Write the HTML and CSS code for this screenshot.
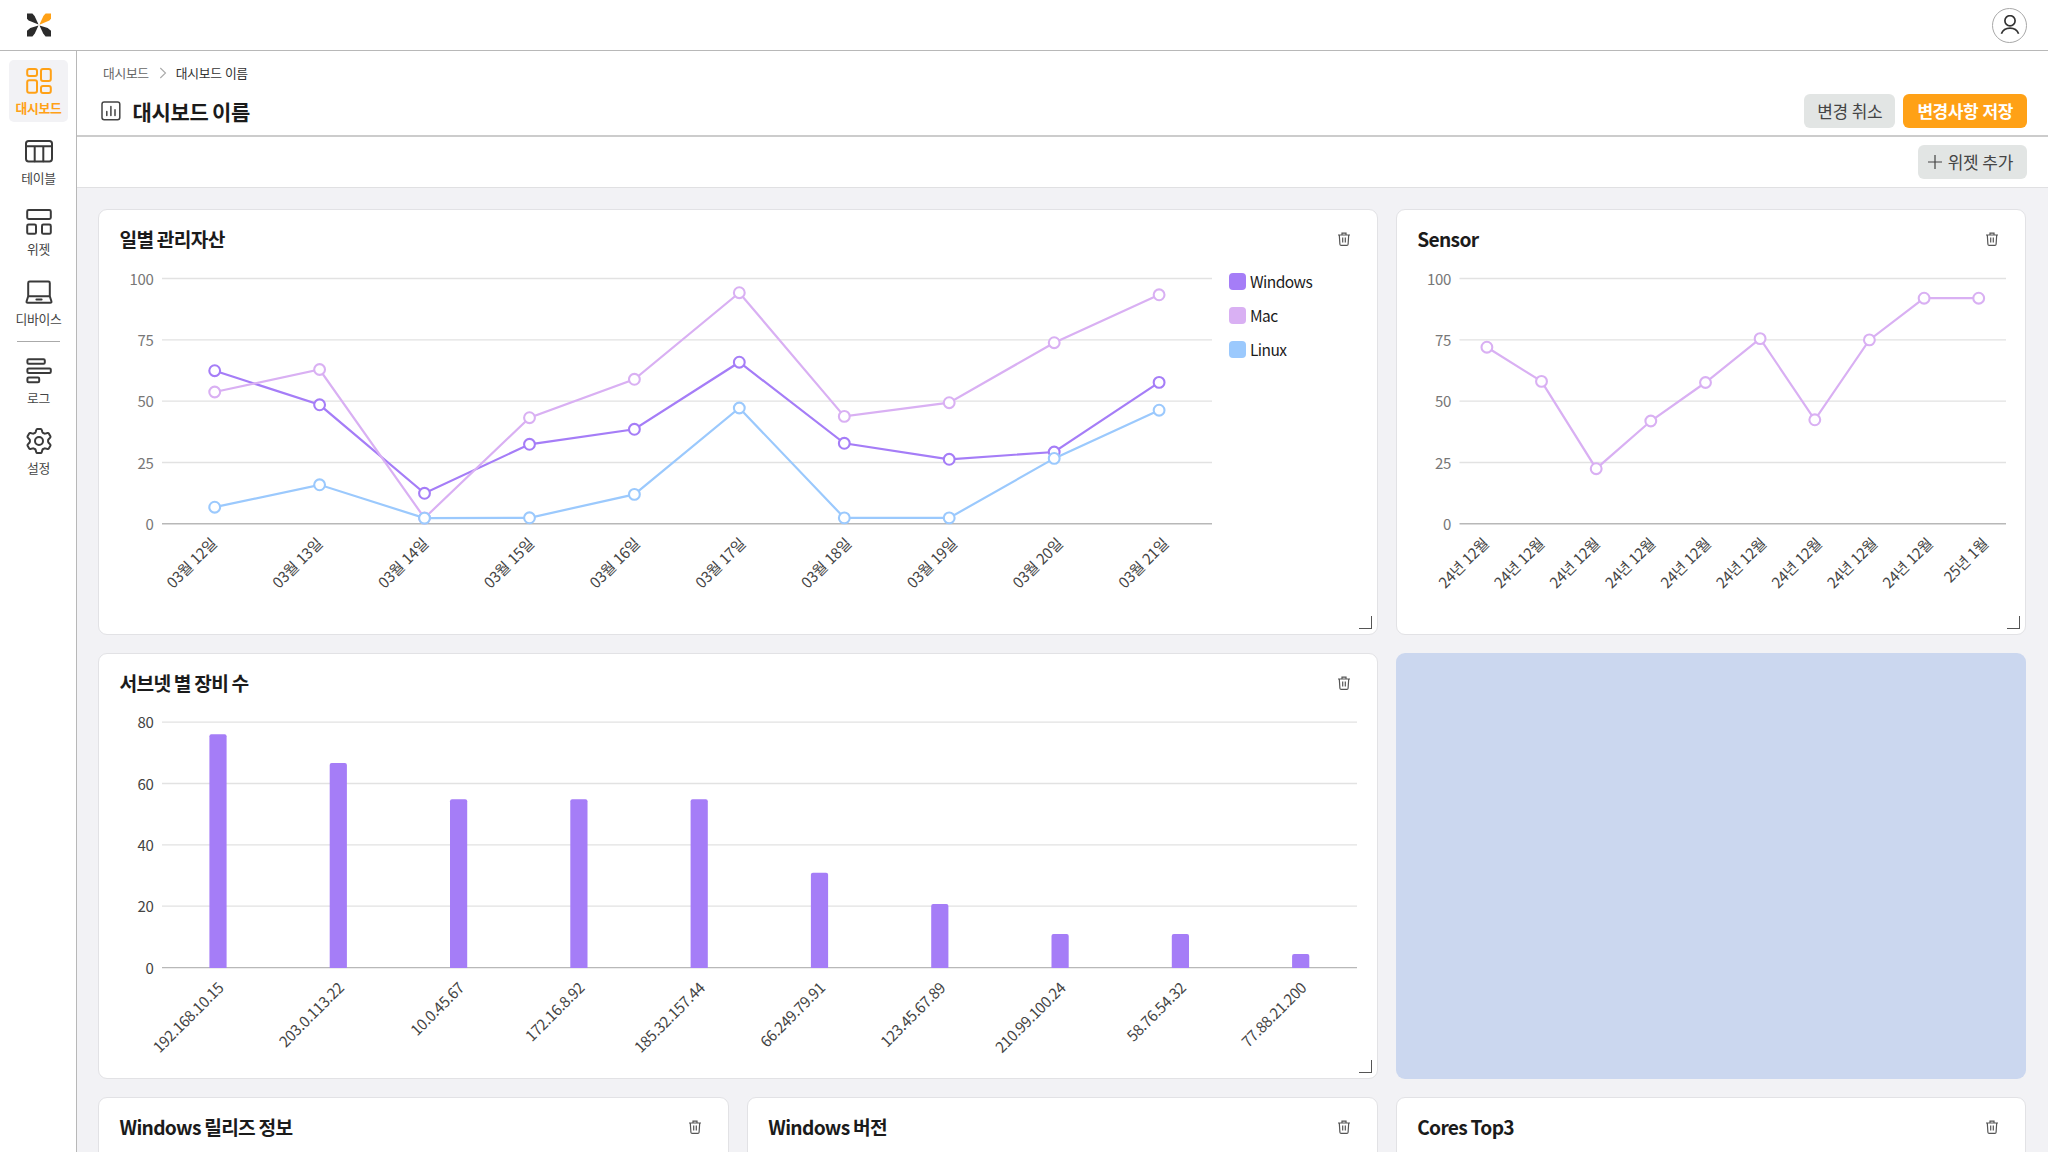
FILE: index.html
```
<!DOCTYPE html>
<html lang="ko">
<head>
<meta charset="utf-8">
<title>대시보드 이름</title>
<link rel="stylesheet" href="styles.css">
</head>
<body>
<svg class="defs" width="0" height="0" aria-hidden="true">
  <defs>
    <symbol id="trash" viewBox="0 0 16 16">
      <path d="M2 4h12M6 3.8V2.1h4v1.7M3.3 4l.6 9.2c.1.8.5 1.2 1.2 1.2h5.8c.7 0 1.1-.4 1.2-1.2l.6-9.2M6.7 6.4v5.2M9.3 6.4v5.2"/>
    </symbol>
    <marker id="dot-violet" markerUnits="userSpaceOnUse" markerWidth="14" markerHeight="14" refX="7" refY="7"><circle class="dot violet" cx="7" cy="7" r="5.4"/></marker>
    <marker id="dot-lilac" markerUnits="userSpaceOnUse" markerWidth="14" markerHeight="14" refX="7" refY="7"><circle class="dot lilac" cx="7" cy="7" r="5.4"/></marker>
    <marker id="dot-sky" markerUnits="userSpaceOnUse" markerWidth="14" markerHeight="14" refX="7" refY="7"><circle class="dot sky" cx="7" cy="7" r="5.4"/></marker>
  </defs>
</svg>

<header class="topbar">
  <svg class="logo" width="26" height="26" viewBox="0 0 26 26">
    <path class="ink" d="M1 1.400h5.400L8.600 4l3.900 8.500L2.600 8.400 1 6.800z"/>
    <path class="accent" d="M25 1.400h-5.400L17.400 4l-4 8.700 10-4.300 1.600-1.700z"/>
    <path class="ink" d="M1 24.500h5.400l2.400-2.900 3.700-8-8.200 2.400L1 18.700z"/>
    <path class="ink" d="M25 24.500h-5.400l-2.400-2.900-3.700-8 8.200 2.400 3.300 2.700z"/>
  </svg>
  <button class="avatar" aria-label="내 계정">
    <svg width="20" height="20" viewBox="0 0 20 20"><circle cx="10" cy="5.800" r="5.100"/><path d="M1.400 18.800c1.400-3.600 4.600-5.600 8.600-5.600s7.200 2 8.600 5.600"/></svg>
  </button>
</header>

<div class="shell">
  <nav class="sidebar">
    <a class="nav-item active">
      <svg viewBox="0 0 32 32"><rect x="4.2" y="4" width="9.8" height="7" rx="2"/><rect x="18" y="4" width="9.8" height="12" rx="2"/><rect x="4.2" y="15.2" width="9.8" height="12.6" rx="2"/><rect x="18" y="21" width="9.8" height="7" rx="2"/></svg>
      <span>대시보드</span>
    </a>
    <a class="nav-item">
      <svg viewBox="0 0 32 32"><rect x="3" y="6" width="26" height="20.4" rx="2.6"/><path d="M3 11.2h26M11.7 11.2v15M20.3 11.2v15"/></svg>
      <span>테이블</span>
    </a>
    <a class="nav-item">
      <svg viewBox="0 0 32 32"><rect x="4.2" y="4" width="23.6" height="9" rx="1.4"/><rect x="4.2" y="18.6" width="8.8" height="9.2" rx="1.4"/><rect x="19" y="18.6" width="8.8" height="9.2" rx="1.4"/></svg>
      <span>위젯</span>
    </a>
    <a class="nav-item">
      <svg viewBox="0 0 32 32"><path d="M5.2 20.2V7q0-1.4 1.4-1.4h18.8q1.4 0 1.4 1.4v13.2M5.2 20.2h21.6l1.6 5q.4 1.6-1.2 1.6H4.8q-1.6 0-1.2-1.6zM13.4 23.6h5.2"/></svg>
      <span>디바이스</span>
    </a>
    <hr class="nav-line">
    <a class="nav-item">
      <svg viewBox="0 0 32 32"><rect x="4.4" y="4.2" width="17.4" height="4.6" rx="1.2"/><rect x="4.4" y="13.4" width="23.4" height="4.6" rx="1.2"/><rect x="4.4" y="22.6" width="11.8" height="4.6" rx="1.2"/></svg>
      <span>로그</span>
    </a>
    <a class="nav-item">
      <svg viewBox="0 0 32 32"><path d="M14.3 4h3.4q.8 0 1 .8l.7 2.3q.2.6.8.9l.8.4q.6.3 1.2.2l2.4-.6q.8-.2 1.200.5l1.600 2.800q.4.7-.2 1.300l-1.600 1.700q-.5.500-.5 1.200v1q0 .7.500 1.200l1.600 1.700q.6.600.2 1.300l-1.600 2.800q-.4.700-1.200.500l-2.400-.6q-.6-.1-1.200.2l-.8.400q-.6.300-.8.900l-.7 2.300q-.2.800-1 .800h-3.400q-.8 0-1-.8l-.7-2.300q-.2-.6-.8-.9l-.8-.4q-.6-.3-1.200-.2l-2.400.6q-.8.200-1.200-.5l-1.600-2.800q-.4-.7.2-1.300l1.600-1.700q.5-.5.500-1.200v-1q0-.7-.5-1.200l-1.600-1.700q-.6-.6-.2-1.300l1.600-2.800q.4-.7 1.200-.5l2.400.6q.6.1 1.200-.2l.8-.4q.6-.3.800-.9l.7-2.300q.2-.8 1-.8z"/><circle cx="16" cy="16" r="4"/></svg>
      <span>설정</span>
    </a>
  </nav>

  <main class="main">
    <section class="page-head">
      <div class="crumbs">
        <span>대시보드</span>
        <svg width="8" height="12" viewBox="0 0 8 12"><path d="M1.300 1l5.200 5-5.200 5"/></svg>
        <span class="current">대시보드 이름</span>
      </div>
      <div class="title-row">
        <svg class="title-icon" width="20" height="20" viewBox="0 0 20 20"><rect x="1" y="1" width="17.800" height="17.800" rx="2.200"/><path d="M5.800 10.600v4M9.900 5.400v9.200M14 8.800v5.800"/></svg>
        <h1>대시보드 이름</h1>
        <div class="actions">
          <button class="btn cancel">변경 취소</button>
          <button class="btn primary">변경사항 저장</button>
        </div>
      </div>
    </section>
    <section class="toolbar">
      <button class="btn add"><svg width="14" height="14" viewBox="0 0 14 14"><path d="M7 0v14M0 7h14"/></svg>위젯 추가</button>
    </section>

    <section class="board">
      <article class="card wide">
        <header class="card-head"><h2>일별 관리자산</h2><svg class="trash"><use href="#trash"/></svg></header>
        <div class="card-body">
          <svg class="chart" width="1120" height="366" viewBox="99 268 1120 366">
            <path class="grid" d="M162 278.500h1050M162 339.800h1050M162 401.200h1050M162 462.500h1050"/>
            <path class="axis" d="M162 523.800h1050"/>
            <g class="ylab"><text x="153.500" y="284.500">100</text><text x="153.500" y="345.800">75</text><text x="153.500" y="407.200">50</text><text x="153.500" y="468.500">25</text><text x="153.500" y="529.800">0</text></g>
            <polyline class="line violet" marker-start="url(#dot-violet)" marker-mid="url(#dot-violet)" marker-end="url(#dot-violet)" points="214.700,370.700 319.600,404.800 424.500,493.300 529.500,444.300 634.400,429.300 739.300,362.200 844.300,443.300 949.200,459.300 1054.200,452 1159.100,382.400"/>
            <polyline class="line lilac" marker-start="url(#dot-lilac)" marker-mid="url(#dot-lilac)" marker-end="url(#dot-lilac)" points="214.700,392 319.600,369.500 424.500,518 529.500,417.700 634.400,379.300 739.300,292.700 844.300,416.400 949.200,402.700 1054.200,342.700 1159.100,294.800"/>
            <polyline class="line sky" marker-start="url(#dot-sky)" marker-mid="url(#dot-sky)" marker-end="url(#dot-sky)" points="214.700,507.200 319.600,484.800 424.500,518.100 529.500,517.800 634.400,494.400 739.300,408 844.300,517.900 949.200,517.900 1054.200,458.400 1159.100,410.200"/>
            <g class="xlab">
              <text transform="translate(217.700,544.700) rotate(-45)">03월 12일</text><text transform="translate(323.500,544.700) rotate(-45)">03월 13일</text><text transform="translate(429.200,544.700) rotate(-45)">03월 14일</text><text transform="translate(535,544.700) rotate(-45)">03월 15일</text><text transform="translate(640.700,544.700) rotate(-45)">03월 16일</text><text transform="translate(746.500,544.700) rotate(-45)">03월 17일</text><text transform="translate(852.200,544.700) rotate(-45)">03월 18일</text><text transform="translate(958,544.700) rotate(-45)">03월 19일</text><text transform="translate(1063.700,544.700) rotate(-45)">03월 20일</text><text transform="translate(1169.500,544.700) rotate(-45)">03월 21일</text>
            </g>
          </svg>
          <ul class="legend"><li><i class="sw violet"></i>Windows</li><li><i class="sw lilac"></i>Mac</li><li><i class="sw sky"></i>Linux</li></ul>
        </div>
        <span class="grip"></span>
      </article>

      <article class="card">
        <header class="card-head"><h2>Sensor</h2><svg class="trash"><use href="#trash"/></svg></header>
        <div class="card-body">
          <svg class="chart" width="629" height="366" viewBox="1396.500 268 629 366">
            <path class="grid" d="M1459 278.500h546.500M1459 339.800h546.500M1459 401.200h546.500M1459 462.500h546.500"/>
            <path class="axis" d="M1459 523.800h546.500"/>
            <g class="ylab"><text x="1450.500" y="284.500">100</text><text x="1450.500" y="345.800">75</text><text x="1450.500" y="407.200">50</text><text x="1450.500" y="468.500">25</text><text x="1450.500" y="529.800">0</text></g>
            <polyline class="line lilac" marker-start="url(#dot-lilac)" marker-mid="url(#dot-lilac)" marker-end="url(#dot-lilac)" points="1486.400,347.200 1541,381.400 1595.700,468.700 1650.300,421 1705,382.500 1759.600,338.600 1814.300,419.800 1868.900,339.900 1923.600,298.200 1978.200,298.200"/>
            <g class="xlab">
              <text transform="translate(1489.200,544.700) rotate(-45)">24년 12월</text><text transform="translate(1544.700,544.700) rotate(-45)">24년 12월</text><text transform="translate(1600.200,544.700) rotate(-45)">24년 12월</text><text transform="translate(1655.700,544.700) rotate(-45)">24년 12월</text><text transform="translate(1711.200,544.700) rotate(-45)">24년 12월</text><text transform="translate(1766.700,544.700) rotate(-45)">24년 12월</text><text transform="translate(1822.200,544.700) rotate(-45)">24년 12월</text><text transform="translate(1877.700,544.700) rotate(-45)">24년 12월</text><text transform="translate(1933.200,544.700) rotate(-45)">24년 12월</text><text transform="translate(1988.700,544.700) rotate(-45)">25년 1월</text>
            </g>
          </svg>
        </div>
        <span class="grip"></span>
      </article>

      <article class="card wide">
        <header class="card-head"><h2>서브넷 별 장비 수</h2><svg class="trash"><use href="#trash"/></svg></header>
        <div class="card-body">
          <svg class="chart" width="1277" height="366" viewBox="99 712 1277 366">
            <path class="grid" d="M162 722.200h1195M162 783.500h1195M162 844.900h1195M162 906.200h1195"/>
            <path class="axis" d="M162 967.600h1195"/>
            <g class="ylab dark"><text x="153.500" y="728.200">80</text><text x="153.500" y="789.500">60</text><text x="153.500" y="850.900">40</text><text x="153.500" y="912.200">20</text><text x="153.500" y="973.600">0</text></g>
            <g class="bars">
              <path d="M209.400 968V736.300q0-2 2-2h13.200q2 0 2 2V968z"/><path d="M329.700 968V765q0-2 2-2h13.200q2 0 2 2V968z"/><path d="M450 968V801.300q0-2 2-2h13.200q2 0 2 2V968z"/><path d="M570.300 968V801.300q0-2 2-2h13.200q2 0 2 2V968z"/><path d="M690.600 968V801.300q0-2 2-2h13.200q2 0 2 2V968z"/><path d="M810.900 968V874.800q0-2 2-2h13.200q2 0 2 2V968z"/><path d="M931.200 968V906q0-2 2-2h13.200q2 0 2 2V968z"/><path d="M1051.500 968V936q0-2 2-2h13.200q2 0 2 2V968z"/><path d="M1171.800 968V936q0-2 2-2h13.200q2 0 2 2V968z"/><path d="M1292.100 968V956q0-2 2-2h13.200q2 0 2 2V968z"/>
            </g>
            <g class="xlab">
              <text transform="translate(224.600,989) rotate(-45)">192.168.10.15</text><text transform="translate(344.900,989) rotate(-45)">203.0.113.22</text><text transform="translate(465.200,989) rotate(-45)">10.0.45.67</text><text transform="translate(585.500,989) rotate(-45)">172.16.8.92</text><text transform="translate(705.800,989) rotate(-45)">185.32.157.44</text><text transform="translate(826.100,989) rotate(-45)">66.249.79.91</text><text transform="translate(946.400,989) rotate(-45)">123.45.67.89</text><text transform="translate(1066.700,989) rotate(-45)">210.99.100.24</text><text transform="translate(1187,989) rotate(-45)">58.76.54.32</text><text transform="translate(1307.300,989) rotate(-45)">77.88.21.200</text>
            </g>
          </svg>
        </div>
        <span class="grip"></span>
      </article>

      <div class="drop-slot"></div>

      <article class="card"><header class="card-head"><h2>Windows 릴리즈 정보</h2><svg class="trash"><use href="#trash"/></svg></header></article>
      <article class="card"><header class="card-head"><h2>Windows 버전</h2><svg class="trash"><use href="#trash"/></svg></header></article>
      <article class="card"><header class="card-head"><h2>Cores Top3</h2><svg class="trash"><use href="#trash"/></svg></header></article>
    </section>
  </main>
</div>
</body>
</html>
```
FILE: styles.css
```
* { box-sizing: border-box; }
body {
  margin: 0;
  height: 1152px;
  display: flex;
  flex-direction: column;
  overflow: hidden;
  background: #fff;
  color: #1b1b1b;
  font-family: "Noto Sans CJK KR", "Noto Sans", sans-serif;
  letter-spacing: -0.02em;
}
svg { display: block; fill: none; flex: none; }
.defs { position: absolute; }
h1, h2, ul { margin: 0; padding: 0; }
button { font: inherit; letter-spacing: inherit; border: 0; padding: 0; }

.topbar {
  flex: none;
  height: 51px;
  padding: 0 21px 0 25.5px;
  display: flex;
  align-items: center;
  justify-content: space-between;
  border-bottom: 1px solid #b8b8b8;
}
.logo .ink { fill: #2b2b2b; }
.logo .accent { fill: #ffa116; }
.avatar {
  width: 35px;
  height: 35px;
  border: 1px solid #a8a8a8;
  border-radius: 50%;
  background: #fff;
  display: flex;
  align-items: center;
  justify-content: center;
}
.avatar svg { stroke: #333; stroke-width: 1.7; }

.shell { flex: 1; min-height: 0; display: flex; }
.sidebar {
  flex: none;
  width: 77px;
  padding: 9px 0 0 1px;
  border-right: 1px solid #b8b8b8;
  display: flex;
  flex-direction: column;
  align-items: center;
  gap: 8.4px;
}
.nav-item {
  flex: none;
  width: 59px;
  height: 62px;
  padding-top: 5px;
  border-radius: 5px;
  display: flex;
  flex-direction: column;
  align-items: center;
  gap: 1px;
  font-size: 12.8px;
  line-height: 20px;
  color: #444;
  white-space: nowrap;
}
.nav-item svg { width: 32px; height: 32px; stroke: #3a3a3a; stroke-width: 2; stroke-linejoin: round; stroke-linecap: round; }
.nav-item.active { background: #f2f2f5; color: #ffa116; font-weight: 700; }
.nav-item.active svg { stroke: #ffa116; }
.nav-line { flex: none; width: 43px; height: 1px; margin: -1px 0 0; border: 0; background: #aaa; }

.main { flex: 1; min-width: 0; display: flex; flex-direction: column; }
.page-head {
  flex: none;
  height: 86px;
  padding: 12px 21px 0 24px;
  border-bottom: 2px solid #ccc;
}
.crumbs { display: flex; align-items: center; gap: 10px; height: 20px; padding-left: 2px; font-size: 12.8px; line-height: 20px; color: #666; }
.crumbs svg { stroke: #aaa; stroke-width: 1.1; }
.crumbs span { margin-top: -1px; }
.crumbs .current { margin-left: -1px; color: #333; }
.title-row { display: flex; align-items: center; height: 34px; margin-top: 11px; }
.title-icon { stroke: #444; stroke-width: 1.5; stroke-linecap: round; }
h1 { margin-left: 11.5px; font-size: 21px; line-height: 34px; font-weight: 700; word-spacing: -2px; }
.actions { margin-left: auto; display: flex; gap: 8px; }
.btn {
  height: 34px;
  padding: 0 14px;
  border-radius: 6px;
  background: #e2e5e4;
  color: #444;
  font-size: 17px;
  line-height: 34px;
  white-space: nowrap;
}
.btn.cancel { padding: 0 13px; word-spacing: -0.5px; }
.btn.primary { background: #ffa116; color: #fff; font-weight: 700; letter-spacing: -0.025em; }
.toolbar {
  flex: none;
  height: 51px;
  padding: 8px 21px 0;
  display: flex;
  justify-content: flex-end;
  border-bottom: 1px solid #e0e0e2;
}
.btn.add { display: flex; align-items: center; gap: 6px; padding-left: 10px; word-spacing: -0.5px; }
.btn.add svg { stroke: #444; stroke-width: 1.2; }

.board {
  flex: 1;
  min-height: 0;
  overflow: hidden;
  padding: 21px 21.5px 0 21px;
  background: #f2f2f5;
  display: grid;
  grid-template-columns: repeat(3, 1fr);
  grid-auto-rows: 426px;
  gap: 18px;
}
.card {
  position: relative;
  min-width: 0;
  background: #fff;
  border: 1px solid #e2e2e5;
  border-radius: 9px;
}
.card.wide { grid-column: span 2; }
.card-head { height: 58px; padding: 0 25px 1px 20.5px; display: flex; align-items: center; justify-content: space-between; }
h2 { font-size: 19.2px; line-height: 28px; font-weight: 700; letter-spacing: -0.035em; word-spacing: -1.3px; }
.trash { width: 16px; height: 16px; stroke: #555; stroke-width: 1.2; }
.card-body { display: flex; }
.grip {
  position: absolute;
  right: 5px;
  bottom: 5px;
  width: 13px;
  height: 13px;
  border-right: 1px solid #555;
  border-bottom: 1px solid #555;
}
.drop-slot { background: #cbd7ef; border-radius: 9px; }

.grid { stroke: #e2e2e2; stroke-width: 1.300; }
.axis { stroke: #b8b8b8; stroke-width: 1.400; }
.chart text { font-size: 15px; text-anchor: end; }
.ylab { fill: #777; }
.ylab.dark, .xlab { fill: #444; }
.line { stroke-width: 2.200; }
.dot { fill: #fff; stroke-width: 2.100; }
.line.violet, .dot.violet { stroke: #a57df7; }
.line.lilac, .dot.lilac { stroke: #d9b0f3; }
.line.sky, .dot.sky { stroke: #9bc9fd; }
.bars { fill: #a57df7; }

.legend { list-style: none; padding: 5px 0 0 10px; font-size: 15.500px; line-height: 17px; letter-spacing: -0.035em; }
.legend li { display: flex; align-items: center; gap: 4px; height: 17px; margin-bottom: 17px; }
.sw { width: 17px; height: 17px; border-radius: 4px; }
.sw.violet { background: #a57df7; }
.sw.lilac { background: #d9b0f3; }
.sw.sky { background: #9bc9fd; }
```
